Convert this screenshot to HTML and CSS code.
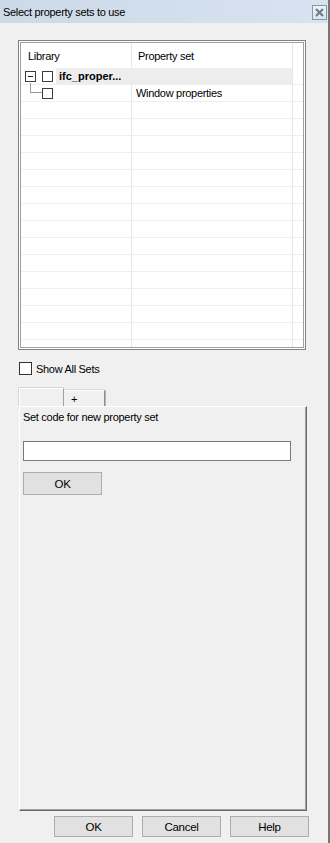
FILE: index.html
```html
<!DOCTYPE html>
<html lang="en">
<head>
  <meta charset="UTF-8">
  <meta name="viewport" content="width=device-width, initial-scale=1.0">
  <title>Select property sets to use</title>
  <link rel="stylesheet" href="styles.css">
</head>
<body>
  <div class="window">
    <div class="titlebar">
      <span class="title">Select property sets to use</span>
      <div class="close">
        <svg width="9" height="9" viewBox="0 0 9 9">
          <path d="M1 1 L8 8 M8 1 L1 8" stroke="#6f7b87" stroke-width="2.2" fill="none"/>
        </svg>
      </div>
    </div>

    <div class="content">
      <div class="list-frame">
        <div class="list">
          <div class="list-head">
            <div class="cell">Library</div>
            <div class="cell">Property set</div>
            <div class="cell"></div>
          </div>

          <div class="row row-selected">
            <div class="cell tree-cell">
              <span class="expander"></span>
              <span class="tree-check"></span>
              <span class="tree-label">ifc_proper...</span>
            </div>
            <div class="cell"></div>
            <div class="cell"></div>
          </div>

          <div class="row">
            <div class="cell tree-cell">
              <span class="tree-line"></span>
              <span class="tree-check"></span>
            </div>
            <div class="cell">Window properties</div>
            <div class="cell"></div>
          </div>

          <div class="row"><div class="cell"></div><div class="cell"></div><div class="cell"></div></div>
          <div class="row"><div class="cell"></div><div class="cell"></div><div class="cell"></div></div>
          <div class="row"><div class="cell"></div><div class="cell"></div><div class="cell"></div></div>
          <div class="row"><div class="cell"></div><div class="cell"></div><div class="cell"></div></div>
          <div class="row"><div class="cell"></div><div class="cell"></div><div class="cell"></div></div>
          <div class="row"><div class="cell"></div><div class="cell"></div><div class="cell"></div></div>
          <div class="row"><div class="cell"></div><div class="cell"></div><div class="cell"></div></div>
          <div class="row"><div class="cell"></div><div class="cell"></div><div class="cell"></div></div>
          <div class="row"><div class="cell"></div><div class="cell"></div><div class="cell"></div></div>
          <div class="row"><div class="cell"></div><div class="cell"></div><div class="cell"></div></div>
          <div class="row"><div class="cell"></div><div class="cell"></div><div class="cell"></div></div>
          <div class="row"><div class="cell"></div><div class="cell"></div><div class="cell"></div></div>
          <div class="row"><div class="cell"></div><div class="cell"></div><div class="cell"></div></div>
          <div class="row"><div class="cell"></div><div class="cell"></div><div class="cell"></div></div>
          <div class="row"><div class="cell"></div><div class="cell"></div><div class="cell"></div></div>
        </div>
      </div>

      <label class="show-all">
        <span class="check"></span>
        <span>Show All Sets</span>
      </label>

      <div class="tabs">
        <div class="tab tab-active"></div>
        <div class="tab">+</div>
      </div>

      <div class="panel">
        <div class="panel-label">Set code for new property set</div>
        <input type="text" class="code-input">
        <button class="btn btn-inner">OK</button>
      </div>

      <div class="dialog-buttons">
        <button class="btn">OK</button>
        <button class="btn">Cancel</button>
        <button class="btn">Help</button>
      </div>
    </div>
  </div>
</body>
</html>
```

FILE: styles.css
```css
* {
  box-sizing: border-box;
}
body {
  margin: 0;
  font-family: 'Liberation Sans', Arial, sans-serif;
  font-size: 11px;
  letter-spacing: -0.3px;
  color: #000;
  background-color: #f0f0f0;
}
.window {
  width: 330px;
  height: 843px;
  background-color: #f0f0f0;
  border-right: 2px solid #767676;
  overflow: hidden;
}
.titlebar {
  height: 23px;
  display: flex;
  align-items: center;
  justify-content: space-between;
  padding-left: 3px;
  background: linear-gradient(to right, #ccd9e6, #d7e3f0);
}
.title {
  font-size: 11px;
}
.close {
  width: 15px;
  height: 15px;
  margin-top: 1px;
  margin-right: 1px;
  border: 1px solid #8a96a2;
  background: linear-gradient(#edf2f7, #dbe4ed);
  display: flex;
  align-items: center;
  justify-content: center;
}
.content {
  padding-left: 18px;
}
.list-frame {
  margin-top: 17px;
  width: 288px;
  height: 310px;
  border: 1px solid #828282;
  padding: 1px;
  background-color: #fff;
}
.list {
  height: 100%;
  border: 1px solid #a0a0a0;
  background-color: #fff;
  overflow: hidden;
}
.list-head,
.row {
  display: grid;
  grid-template-columns: 111px 161px 10px;
}
.list-head {
  height: 25px;
}
.list-head .cell {
  display: flex;
  align-items: center;
  padding-top: 1px;
}
.list-head .cell:first-child {
  padding-left: 7px;
}
.list-head .cell:nth-child(2) {
  padding-left: 6px;
}
.cell {
  border-right: 1px solid #e6e6e6;
}
.cell:last-child {
  border-right: none;
}
.row {
  height: 17px;
  border-bottom: 1px solid #efefef;
}
.row .cell {
  display: flex;
  align-items: center;
}
.row .cell:nth-child(2) {
  padding-left: 4px;
}
.tree-cell {
  padding-left: 4px;
}
.expander {
  width: 11px;
  height: 11px;
  border: 1px solid #3c3c3c;
  background-color: #fff;
  margin-right: 6px;
  display: flex;
  align-items: center;
  justify-content: center;
}
.expander::after {
  content: "";
  width: 5px;
  height: 1px;
  background-color: #222;
}
.tree-check {
  width: 11px;
  height: 11px;
  border: 1px solid #3c3c3c;
  background-color: #fff;
}
.tree-label {
  align-self: stretch;
  flex: 1;
  margin-left: 3px;
  padding-left: 3px;
  display: flex;
  align-items: center;
  font-weight: bold;
  letter-spacing: 0;
  white-space: nowrap;
}
.row-selected .tree-label,
.row-selected .cell:nth-child(2) {
  background-color: #ededed;
}
.row-selected .cell:first-child {
  border-right-color: #ededed;
}
.tree-line {
  align-self: flex-start;
  width: 12px;
  height: 10px;
  margin-top: -2px;
  margin-left: 5px;
  border-left: 1px solid #9a9a9a;
  border-bottom: 1px solid #9a9a9a;
}
.show-all {
  display: flex;
  align-items: center;
  gap: 4px;
  margin: 12px 0 0 1px;
  height: 13px;
}
.check {
  width: 13px;
  height: 13px;
  border: 1px solid #333;
  background-color: #fff;
}
.tabs {
  display: flex;
  align-items: flex-end;
  height: 18px;
  margin: 13px 0 0 1px;
}
.tab {
  height: 16px;
  width: 41px;
  padding-left: 7px;
  line-height: 16px;
  border-top: 1px solid #fff;
  border-right: 1px solid #8e8e8e;
  box-shadow: 1px 0 0 #b4b4b4, 0 -1px 0 #dadada;
}
.tab-active {
  height: 18px;
  width: 45px;
  border-left: 1px solid #fff;
  border-right: 1px solid #a0a0a0;
  box-shadow: 0 -1px 0 #d4d4d4, -1px 0 0 #d4d4d4;
}
.panel {
  width: 288px;
  height: 405px;
  margin-left: 1px;
  padding: 4px 0 0 3px;
  border-top: 1px solid #fff;
  border-left: 1px solid #fff;
  border-right: 1px solid #696969;
  border-bottom: 1px solid #696969;
  box-shadow: inset -1px -1px 0 #a0a0a0;
}
.panel-label {
  line-height: 13px;
}
.code-input {
  display: block;
  width: 268px;
  height: 20px;
  margin: 17px 0 0 0;
  padding: 0 3px;
  border: 1px solid #7a7a7a;
  background-color: #fff;
  font: inherit;
}
.btn {
  width: 79px;
  height: 22px;
  padding: 0;
  border: 1px solid #adadad;
  background-color: #e1e1e1;
  font-family: inherit;
  font-size: 11.5px;
  letter-spacing: -0.3px;
  color: #000;
}
.btn-inner {
  display: block;
  height: 23px;
  margin-top: 11px;
}
.dialog-buttons {
  display: flex;
  gap: 9px;
  margin: 5px 0 0 36px;
}
.dialog-buttons .btn {
  height: 21px;
}
```
